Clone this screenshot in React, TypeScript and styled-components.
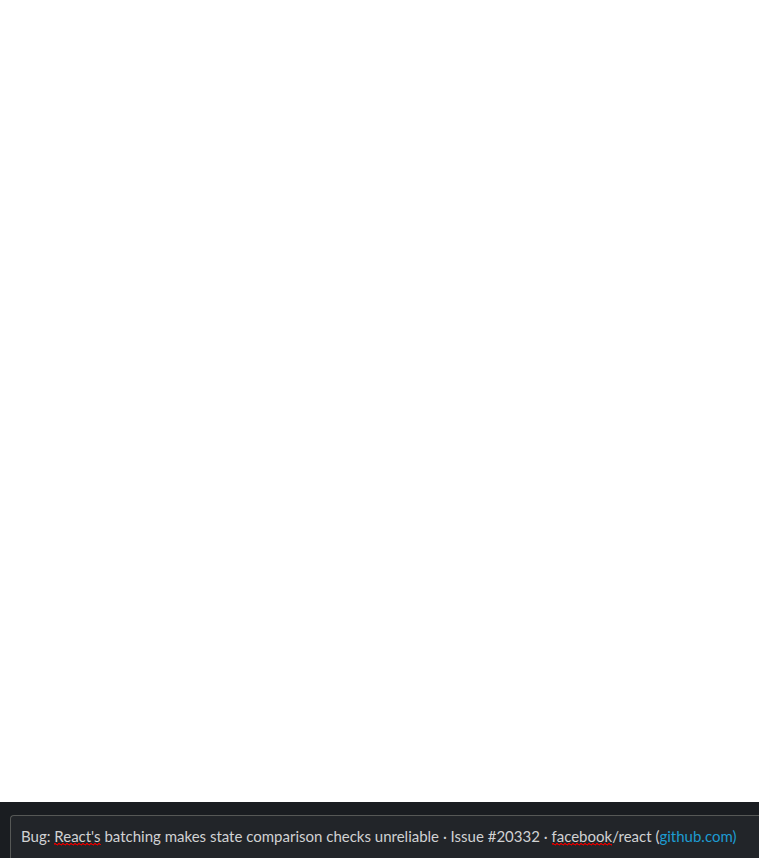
import * as React from 'react';
import styled, { createGlobalStyle } from 'styled-components';

const GlobalStyle = createGlobalStyle`
    body {
        margin: 0;
        background: #FFFFFF;
    }
`;

const Page = styled.main`
    min-height: 100vh;
    display: flex;
    flex-direction: column;
    justify-content: flex-end;
`;

const Composer = styled.div`
    background: #1A1D21;
    padding: 13px 0 0 10px;
`;

const MessageBox = styled.div`
    background: #222529;
    border: 1px solid #565856;
    border-right: 0;
    border-bottom: 0;
    border-radius: 4px 0 0 0;
    padding: 9px 10px 11px;
    color: #D1D2D3;
    font-family: Lato, sans-serif;
    font-size: 15px;
    line-height: 22px;
    white-space: nowrap;
    overflow: hidden;
    outline: none;
`;

// the squiggle is three stepped rows of dashes, repeated every 4px
const Misspelled = styled.span`
    padding-bottom: 1px;
    background:
        linear-gradient(90deg, #E00000 2px, transparent 2px) 0 calc(100% - 2px) / 4px 1px repeat-x,
        linear-gradient(90deg, #A00808 1px, #E00000 1px, #E00000 3px, #A00808 3px) 1px calc(100% - 1px) / 4px 1px repeat-x,
        linear-gradient(90deg, #7A1013 1px, transparent 1px) 3px 100% / 4px 1px repeat-x;
`;

const Link = styled.a`
    color: #1D9BD1;
    text-decoration: none;
`;

export default function App() {
    return (
        <Page>
            <GlobalStyle />
            <Composer>
                <MessageBox
                    role="textbox"
                    aria-label="Message"
                    contentEditable
                    suppressContentEditableWarning
                    spellCheck={false}
                >
                    Bug: <Misspelled>React's</Misspelled> batching makes state comparison checks
                    unreliable · Issue #20332 · <Misspelled>facebook</Misspelled>/react (
                    <Link href="https://github.com/facebook/react/issues/20332">github.com)</Link>
                </MessageBox>
            </Composer>
        </Page>
    );
}
